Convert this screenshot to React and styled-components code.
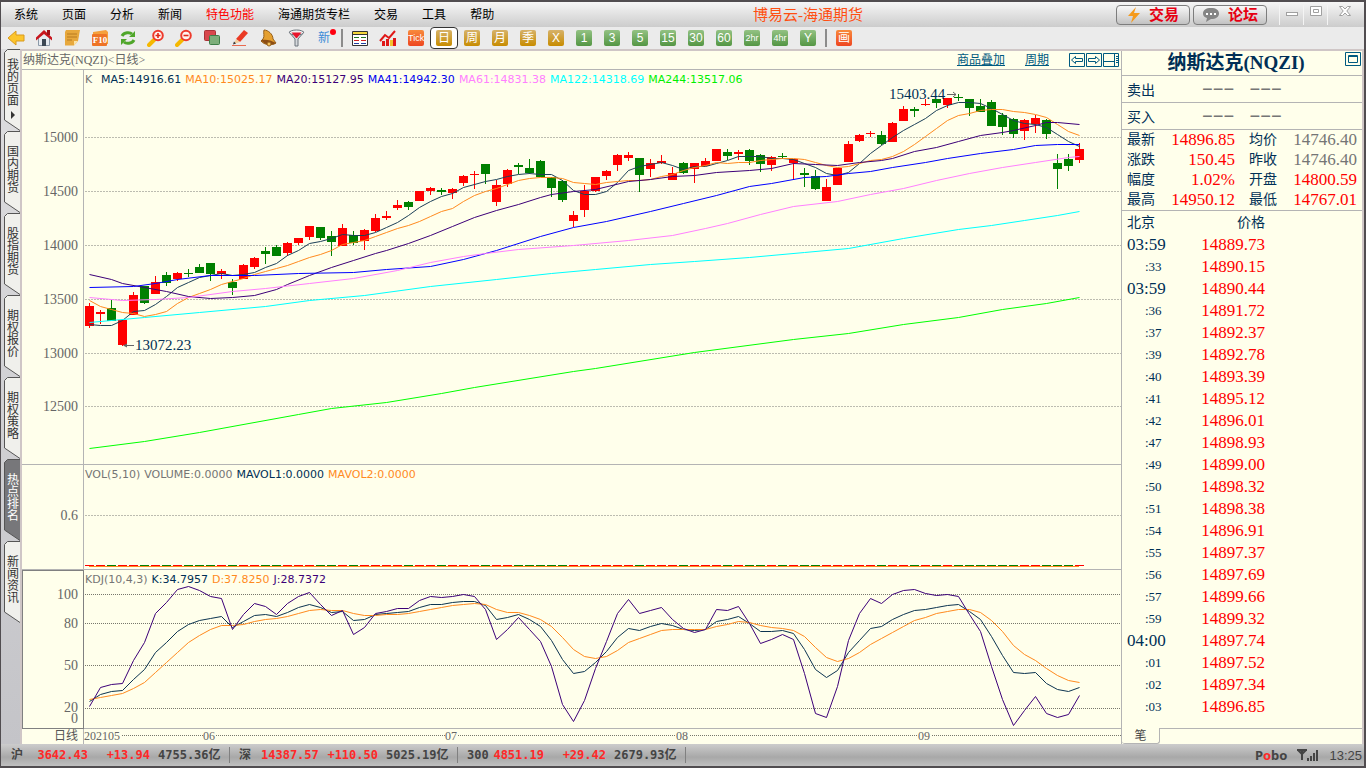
import { useState } from "react";
import styled, { createGlobalStyle } from "styled-components";

const STEP = 11;
const FIRST_X = 5;
const PRICE_TOP = 70;
const VOL_TOP = 465;
const KDJ_TOP = 570;

const menus = [
  { name: "系统" },
  { name: "页面" },
  { name: "分析" },
  { name: "新闻" },
  { name: "特色功能", hot: true },
  { name: "海通期货专栏" },
  { name: "交易" },
  { name: "工具" },
  { name: "帮助" },
];

const sideTabs = [
  { name: "我的页面", arrow: true },
  { name: "国内期货" },
  { name: "股指期货" },
  { name: "期权报价" },
  { name: "期权策略" },
  { name: "热点排名", active: true },
  { name: "新闻资讯" },
];

const periods = [
  ["日", "gold"],
  ["周", "gold"],
  ["月", "gold"],
  ["季", "gold"],
  ["X", "gold"],
  ["1", "green"],
  ["3", "green"],
  ["5", "green"],
  ["15", "green"],
  ["30", "green"],
  ["60", "green"],
  ["2hr", "green"],
  ["4hr", "green"],
  ["Y", "green"],
];

const stats = [
  ["最新", "14896.85", "red", "均价", "14746.40", "gray"],
  ["涨跌", "150.45", "red", "昨收", "14746.40", "gray"],
  ["幅度", "1.02%", "red", "开盘", "14800.59", "red"],
  ["最高", "14950.12", "red", "最低", "14767.01", "red"],
];

const ticks = [
  ["03:59", "14889.73"],
  [":33", "14890.15"],
  ["03:59", "14890.44"],
  [":36", "14891.72"],
  [":37", "14892.37"],
  [":39", "14892.78"],
  [":40", "14893.39"],
  [":41", "14895.12"],
  [":42", "14896.01"],
  [":47", "14898.93"],
  [":49", "14899.00"],
  [":50", "14898.32"],
  [":51", "14898.38"],
  [":54", "14896.91"],
  [":55", "14897.37"],
  [":56", "14897.69"],
  [":57", "14899.66"],
  [":59", "14899.32"],
  ["04:00", "14897.74"],
  [":01", "14897.52"],
  [":02", "14897.34"],
  [":03", "14896.85"],
];

const indexes = [
  ["沪", "3642.43", "+13.94", "4755.36亿"],
  ["深", "14387.57", "+110.50", "5025.19亿"],
  ["300", "4851.19", "+29.42", "2679.93亿"],
];

// up/down flag, body top, body bottom, wick top, wick bottom
const candles = [
  [1, 306, 326, 303, 328], [1, 312, 314, 310, 324], [0, 308, 321, 300, 321], [1, 320, 345, 320, 346],
  [1, 295, 315, 292, 315], [0, 286, 303, 286, 304], [1, 282, 294, 276, 294], [0, 275, 283, 272, 286],
  [1, 273, 279, 272, 281], [0, 273, 274, 269, 277], [0, 267, 273, 264, 273], [0, 263, 274, 263, 281],
  [1, 271, 274, 269, 279], [0, 282, 288, 279, 295], [1, 265, 279, 264, 279], [1, 258, 267, 257, 269],
  [0, 251, 254, 247, 264], [0, 247, 256, 245, 256], [1, 243, 253, 242, 256], [1, 238, 243, 238, 245],
  [1, 226, 237, 226, 240], [0, 227, 238, 227, 240], [0, 236, 242, 231, 256], [1, 228, 246, 224, 246],
  [0, 235, 243, 231, 245], [1, 230, 241, 229, 250], [1, 218, 231, 214, 232], [1, 216, 218, 211, 220],
  [1, 205, 208, 200, 210], [0, 202, 207, 201, 210], [1, 191, 201, 191, 201], [1, 188, 191, 187, 195],
  [0, 190, 192, 188, 195], [1, 189, 193, 188, 199], [1, 176, 183, 175, 186], [1, 174, 175, 171, 189],
  [0, 164, 174, 164, 184], [1, 185, 202, 180, 206], [1, 170, 184, 169, 187], [0, 165, 167, 163, 174],
  [0, 168, 173, 159, 174], [0, 161, 177, 160, 177], [0, 177, 188, 177, 197], [0, 181, 200, 180, 202],
  [1, 215, 221, 211, 227], [1, 191, 210, 185, 217], [1, 177, 191, 177, 192], [1, 171, 176, 170, 180],
  [1, 155, 165, 154, 171], [1, 155, 158, 152, 161], [0, 158, 175, 158, 192], [1, 163, 169, 159, 177],
  [1, 161, 163, 155, 164], [1, 173, 180, 167, 180], [0, 163, 173, 162, 174], [1, 163, 169, 163, 183],
  [1, 161, 166, 158, 166], [1, 149, 161, 149, 161], [0, 152, 156, 149, 160], [1, 152, 154, 150, 160],
  [0, 150, 161, 149, 165], [0, 155, 164, 154, 172], [1, 157, 165, 156, 171], [0, 156, 157, 153, 159],
  [1, 159, 163, 159, 179], [0, 173, 175, 168, 187], [0, 176, 189, 170, 190], [1, 187, 201, 179, 201],
  [1, 168, 185, 168, 185], [1, 144, 162, 141, 162], [1, 135, 141, 134, 142], [1, 133, 134, 131, 137],
  [0, 135, 144, 131, 145], [1, 123, 142, 122, 142], [1, 109, 121, 106, 121], [0, 109, 111, 107, 117],
  [1, 104, 105, 99, 106], [0, 99, 103, 99, 108], [1, 98, 105, 98, 108], [0, 97, 98, 94, 101],
  [0, 99, 108, 99, 116], [0, 106, 112, 99, 112], [0, 102, 126, 100, 126], [0, 115, 127, 113, 135],
  [0, 119, 134, 118, 138], [1, 120, 131, 119, 140], [1, 118, 124, 115, 133], [0, 120, 134, 119, 139],
  [0, 163, 169, 154, 189], [0, 159, 166, 154, 171], [1, 149, 160, 143, 163],
];

const ma5 = [
  324, 325, 325, 320, 311, 310, 304, 296, 287, 282, 277, 275, 273, 275, 274, 272, 267, 263, 255, 250, 243, 241, 238,
  234, 235, 235, 232, 227, 222, 215, 207, 201, 196, 193, 187, 184, 181, 179, 176, 174, 173, 174, 174, 180, 190, 194,
  194, 191, 182, 170, 166, 164, 162, 165, 169, 166, 166, 163, 160, 156, 156, 156, 158, 158, 159, 163, 167, 173, 175,
  172, 163, 153, 145, 137, 130, 124, 118, 110, 105, 102, 102, 103, 108, 114, 120, 123, 124, 127, 134, 141, 146,
];

const ma10 = [
  300, 306, 309, 312, 313, 316, 314, 311, 303, 297, 293, 289, 284, 281, 278, 274, 271, 268, 265, 261, 257, 254, 250,
  244, 242, 240, 236, 232, 228, 225, 221, 216, 211, 208, 201, 195, 191, 188, 184, 180, 178, 177, 177, 178, 182, 183,
  184, 182, 181, 180, 180, 179, 176, 174, 170, 167, 165, 162, 163, 162, 162, 160, 159, 158, 158, 159, 162, 165, 167,
  166, 163, 160, 159, 156, 151, 144, 136, 128, 120, 115, 113, 110, 109, 109, 111, 112, 114, 117, 124, 131, 135,
];

// slower averages only keep the points where they bend: [bar, y]
const ma20 = [
  [0, 274], [2, 279], [3, 283], [5, 287], [7, 291], [9, 296], [11, 298], [13, 297], [15, 295], [17, 289], [18, 284],
  [20, 275], [22, 267], [24, 260], [26, 253], [27, 250], [29, 243], [31, 235], [33, 226], [35, 217], [37, 210],
  [39, 204], [41, 197], [42, 194], [44, 191], [46, 189], [49, 181], [51, 179], [53, 176], [55, 175], [57, 172],
  [60, 170], [62, 168], [64, 163], [66, 164], [68, 165], [70, 162], [72, 160], [73, 158], [75, 151], [77, 147],
  [79, 141], [81, 135], [83, 132], [84, 130], [86, 125], [87, 122], [88, 122], [90, 124],
];

const ma41 = [
  [0, 287], [4, 286], [6, 283], [8, 279], [11, 275], [15, 275], [19, 273], [24, 272], [27, 269], [31, 266],
  [34, 259], [37, 250], [41, 236], [44, 227], [47, 221], [51, 211], [54, 203], [57, 195], [60, 186], [62, 183],
  [65, 177], [67, 176], [69, 173], [71, 171], [73, 167], [76, 162], [78, 158], [81, 153], [84, 149], [86, 145],
  [88, 144], [90, 144],
];

const ma61 = [
  [0, 297], [3, 300], [6, 299], [9, 297], [13, 291], [16, 288], [20, 283], [24, 278], [28, 270], [31, 262],
  [34, 256], [36, 253], [39, 249], [44, 245], [49, 240], [53, 235], [56, 228], [58, 223], [61, 214], [64, 206],
  [68, 201], [71, 194], [74, 188], [77, 180], [80, 173], [83, 167], [86, 162], [89, 157], [90, 156],
];

const ma122 = [
  [0, 322], [5, 317], [10, 312], [16, 306], [20, 300], [25, 295], [31, 286], [37, 279], [42, 273], [46, 269],
  [51, 264], [55, 261], [60, 257], [65, 252], [69, 248], [74, 238], [79, 229], [82, 225], [85, 220], [88, 215],
  [90, 211],
];

const ma244 = [
  [0, 448], [5, 441], [10, 432], [19, 414], [22, 408], [27, 402], [32, 393], [35, 387], [44, 371], [46, 368],
  [55, 352], [64, 339], [69, 333], [74, 324], [79, 317], [83, 309], [87, 303], [90, 297],
];

const lineJ = [
  706, 687, 684, 683, 660, 642, 613, 602, 589, 586, 590, 596, 598, 629, 614, 603, 606, 614, 603, 596, 592, 604, 615,
  610, 634, 627, 613, 611, 608, 608, 600, 596, 597, 596, 594, 596, 609, 639, 629, 617, 629, 641, 666, 704, 721, 700,
  668, 641, 613, 599, 613, 610, 607, 619, 628, 632, 629, 609, 610, 606, 623, 643, 639, 634, 639, 673, 713, 717, 686,
  640, 613, 598, 603, 594, 590, 589, 593, 595, 594, 596, 614, 631, 666, 699, 725, 710, 696, 713, 717, 714, 695,
];

const lineK = [
  701, 694, 691, 690, 679, 669, 652, 642, 631, 624, 620, 618, 616, 627, 621, 615, 614, 616, 612, 607, 604, 607, 612,
  611, 620, 619, 614, 613, 612, 611, 607, 604, 604, 602, 601, 601, 605, 619, 617, 614, 619, 626, 640, 659, 673, 671,
  662, 651, 637, 628, 630, 626, 623, 625, 629, 630, 629, 621, 619, 616, 623, 631, 631, 630, 633, 649, 669, 677, 670,
  652, 640, 628, 626, 619, 614, 610, 609, 607, 605, 604, 611, 619, 636, 655, 672, 673, 672, 683, 689, 691, 687,
];

const lineD = [
  699, 697, 695, 693, 688, 682, 672, 662, 652, 642, 635, 629, 625, 625, 624, 621, 619, 618, 616, 613, 610, 609, 610,
  610, 613, 615, 615, 614, 614, 613, 611, 609, 607, 605, 604, 603, 604, 609, 612, 612, 615, 619, 626, 637, 649, 656,
  658, 656, 650, 642, 638, 634, 630, 629, 629, 629, 629, 626, 624, 621, 622, 625, 627, 628, 630, 636, 647, 657, 661,
  658, 652, 644, 638, 632, 626, 620, 617, 613, 611, 609, 609, 612, 620, 631, 645, 654, 660, 668, 675, 680, 682,
];

const toPoints = (data, top) =>
  data
    .map((e, i) => {
      const [bar, y] = Array.isArray(e) ? e : [i, e];
      return `${FIRST_X + bar * STEP + 0.5},${y - top + 0.5}`;
    })
    .join(" ");

function Grid({ rows, top, dark }) {
  return rows.map((y) => (
    <line
      key={y}
      x1="1"
      x2="100%"
      y1={y - top + 0.5}
      y2={y - top + 0.5}
      stroke={dark ? "#77776c" : "#bcbcb0"}
      strokeDasharray={dark ? "1 1" : "2 1"}
    />
  ));
}

function Axis({ rows, top }) {
  return (
    <AxisSvg>
      {rows.map(([label, y]) => (
        <text key={label} x="56" y={y - top + 5} textAnchor="end">
          {label}
        </text>
      ))}
    </AxisSvg>
  );
}

function PricePanel() {
  return (
    <>
      <AxisCell>
        <Axis
          top={PRICE_TOP}
          rows={[["15000", 137], ["14500", 191], ["14000", 245], ["13500", 299], ["13000", 353], ["12500", 406]]}
        />
      </AxisCell>
      <PlotCell>
        <Legend>
          <LegendHead>K</LegendHead>
          <LegendItem $color="#002f56">MA5:14916.61</LegendItem>
          <LegendItem $color="#ff8a1e">MA10:15025.17</LegendItem>
          <LegendItem $color="#3c0078">MA20:15127.95</LegendItem>
          <LegendItem $color="#0000ee">MA41:14942.30</LegendItem>
          <LegendItem $color="#ff80ff">MA61:14831.38</LegendItem>
          <LegendItem $color="#00ffff">MA122:14318.69</LegendItem>
          <LegendItem $color="#00f000">MA244:13517.06</LegendItem>
        </Legend>
        <PlotSvg>
          <Grid rows={[137, 191, 245, 299, 353, 406]} top={PRICE_TOP} />
          {candles.map(([up, top, bottom, high, low], i) => {
            const x = FIRST_X + i * STEP;
            const color = up ? "#ff0000" : "#008000";
            return (
              <g key={i} fill={color} shapeRendering="crispEdges">
                <rect x={x - 4} y={top - PRICE_TOP} width="9" height={bottom - top} />
                <rect x={x} y={high - PRICE_TOP} width="1" height={low - high} />
              </g>
            );
          })}
          <Line points={toPoints(ma5, PRICE_TOP)} stroke="#1c4058" />
          <Line points={toPoints(ma10, PRICE_TOP)} stroke="#ff8a1e" />
          <Line points={toPoints(ma20, PRICE_TOP)} stroke="#3c0078" />
          <Line points={toPoints(ma41, PRICE_TOP)} stroke="#0000ff" />
          <Line points={toPoints(ma61, PRICE_TOP)} stroke="#ff80ff" />
          <Line points={toPoints(ma122, PRICE_TOP)} stroke="#00ffff" />
          <Line points={toPoints(ma244, PRICE_TOP)} stroke="#00ff00" />
          <g stroke="#666" fill="#666">
            <path d="M40 275.5h10" />
            <path d="M39 275.5l4-2v4z" stroke="none" />
            <path d="M863 24.5h9m-3-2.500l3 2.500l-3 2.500" fill="none" />
          </g>
          <Mark x="51" y="280">
            13072.23
          </Mark>
          <Mark x="805" y="29">
            15403.44
          </Mark>
        </PlotSvg>
      </PlotCell>
    </>
  );
}

function VolumePanel() {
  return (
    <>
      <AxisCell>
        <Axis top={VOL_TOP} rows={[["0.6", 515]]} />
      </AxisCell>
      <PlotCell>
        <Legend>
          <LegendItem $color="#757575">VOL(5,10)</LegendItem>
          <LegendItem $color="#757575">VOLUME:0.0000</LegendItem>
          <LegendItem $color="#002f56">MAVOL1:0.0000</LegendItem>
          <LegendItem $color="#ff8a1e">MAVOL2:0.0000</LegendItem>
        </Legend>
        <PlotSvg>
          <Grid rows={[515]} top={VOL_TOP} />
          <g shapeRendering="crispEdges">
            {candles.map(([up], i) => (
              <rect key={i} x={i * STEP + 1} y="100" width="9" height="1" fill={up ? "#ff0000" : "#008000"} />
            ))}
            <rect x={FIRST_X} y="101" width={90 * STEP} height="1" fill="#ff8a1e" />
          </g>
        </PlotSvg>
      </PlotCell>
    </>
  );
}

function KdjPanel() {
  return (
    <>
      <AxisCell $selected>
        <Axis top={KDJ_TOP} rows={[["100", 594], ["80", 623], ["50", 665], ["20", 707], ["0", 718]]} />
      </AxisCell>
      <PlotCell>
        <Legend>
          <LegendItem $color="#757575">KDJ(10,4,3)</LegendItem>
          <LegendItem $color="#002f56">K:34.7957</LegendItem>
          <LegendItem $color="#ff8a1e">D:37.8250</LegendItem>
          <LegendItem $color="#3c0078">J:28.7372</LegendItem>
        </Legend>
        <PlotSvg>
          <Grid rows={[594, 623, 665, 708]} top={KDJ_TOP} dark />
          <Line points={toPoints(lineK, KDJ_TOP)} stroke="#0c3450" />
          <Line points={toPoints(lineD, KDJ_TOP)} stroke="#ff8a1e" />
          <Line points={toPoints(lineJ, KDJ_TOP)} stroke="#3c0078" />
        </PlotSvg>
      </PlotCell>
    </>
  );
}

function DatePanel() {
  return (
    <>
      <DateName>日线</DateName>
      <PlotCell>
        <DateSvg>
          <line x1="38" x2="100%" y1="6.500" y2="6.500" stroke="#77776c" strokeDasharray="1 1" />
          {[["202105", 0], ["06", 119], ["07", 361], ["08", 592], ["09", 834]].map(([label, x]) => (
            <g key={label}>
              <rect x={x} y="0" width={label.length * 6 + 1} height="14" fill="#ffffeb" />
              <text x={x} y="11">
                {label}
              </text>
            </g>
          ))}
        </DateSvg>
      </PlotCell>
    </>
  );
}

function Magnifier({ plus }) {
  return (
    <svg width="18" height="18" viewBox="0 0 18 18">
      <path d="M2 16l5-5" stroke="#f5b800" strokeWidth="4" strokeLinecap="round" />
      <circle cx="11" cy="6.500" r="4.800" fill="#fff4f0" stroke="#ee3a2c" strokeWidth="2" />
      <path d={plus ? "M8.500 6.500h5M11 4v5" : "M8.500 6.500h5"} stroke="#e02818" strokeWidth="1.600" />
    </svg>
  );
}

function NewIcon() {
  return (
    <>
      <NewText>新</NewText>
      <NewDot />
    </>
  );
}

const tools = [
  {
    name: "后退",
    icon: (
      <svg width="18" height="18" viewBox="0 0 18 18">
        <path d="M1 9l8-7v4h8v6H9v4z" fill="#fcc52c" stroke="#d99a1c" strokeLinejoin="round" />
      </svg>
    ),
  },
  {
    name: "首页",
    icon: (
      <svg width="18" height="18" viewBox="0 0 18 18">
        <path d="M3.500 8v8.500h11V8L9 4z" fill="#e6ebf0" stroke="#8b99a8" />
        <path d="M1 8.500l8-7.500l8 7.500v3L9 5L1 11.500z" fill="#c8161e" />
        <rect x="12" y="1" width="3" height="5" fill="#a01018" />
        <rect x="7" y="10" width="4" height="7" fill="#3c4854" />
      </svg>
    ),
  },
  {
    name: "公告",
    icon: (
      <svg width="18" height="18" viewBox="0 0 18 18">
        <path d="M3 1h14l-2 11l-4 4.500H2V3z" fill="#e7a83c" />
        <path d="M15 12h-4v4.500z" fill="#fbe3a6" />
        <path d="M4 5h10M4 8h10M4 11h5" stroke="#b87a20" />
      </svg>
    ),
  },
  {
    name: "F10",
    icon: (
      <svg width="18" height="18" viewBox="0 0 18 18">
        <path d="M2 3l13-2l2 2v12H2z" fill="#f5a03c" />
        <rect x="1" y="5" width="15" height="12" rx="1" fill="#ee7426" />
        <text x="9" y="14" textAnchor="middle" fill="#fff" fontSize="9" fontWeight="bold" fontFamily="Liberation Serif">
          F10
        </text>
      </svg>
    ),
  },
  {
    name: "刷新",
    icon: (
      <svg width="18" height="18" viewBox="0 0 18 18" fill="none" stroke="#4fa62a" strokeWidth="3">
        <path d="M3 7c2-4 8-4 10-2" />
        <path d="M15 11c-2 4-8 4-10 2" />
        <path d="M16 2v6h-6z M2 16v-6h6z" fill="#4fa62a" stroke="none" />
      </svg>
    ),
  },
  { name: "放大", icon: <Magnifier plus /> },
  { name: "缩小", icon: <Magnifier /> },
  {
    name: "叠加",
    icon: (
      <svg width="18" height="18" viewBox="0 0 18 18">
        <rect x="1.500" y="1.500" width="11" height="10" rx="1" fill="#d8484c" stroke="#a83438" />
        <rect x="6.500" y="6.500" width="10" height="9" rx="1" fill="#7cae7a" stroke="#3e7e48" />
      </svg>
    ),
  },
  {
    name: "画线",
    icon: (
      <svg width="18" height="18" viewBox="0 0 18 18">
        <path d="M5 10l8-9l4 3l-8 9z" fill="#ea3a24" />
        <path d="M5 10l4 3l-6 2z" fill="#f2cc9c" />
        <path d="M2 15.500l3-1l-2-2z" fill="#333" />
        <path d="M1 16.500h14" stroke="#e86a50" />
      </svg>
    ),
  },
  {
    name: "预警",
    icon: (
      <svg width="18" height="18" viewBox="0 0 18 18">
        <path d="M5 1c4 0 9 4 9 9l3 4c-4 3-12 2-15-2l2-2c2-3 0-6 1-9z" fill="#e5a030" stroke="#96601c" />
        <path d="M2 11c5-1 10 0 15 3c-4 3-12 2-15-3z" fill="#8c4d14" />
        <circle cx="10" cy="15" r="2" fill="#f6c45c" stroke="#96601c" />
      </svg>
    ),
  },
  {
    name: "筛选",
    icon: (
      <svg width="18" height="18" viewBox="0 0 18 18">
        <path d="M2 3l6 7v7h3v-7l6-7z" fill="#d5d8dc" stroke="#6c747c" />
        <ellipse cx="9.500" cy="3.500" rx="7" ry="2.500" fill="#f2f2f2" stroke="#6c747c" />
        <path d="M4.500 3.500h10L10 9h-1z" fill="#e8142c" />
      </svg>
    ),
  },
  { name: "新", icon: <NewIcon /> },
];

export default function App() {
  const [period, setPeriod] = useState("日");

  return (
    <>
      <GlobalStyle />
      <Window>
        <TitleBar>
          <Menu>
            {menus.map((menu) => (
              <MenuButton key={menu.name} $hot={menu.hot}>
                {menu.name}
              </MenuButton>
            ))}
          </Menu>
          <AppTitle>博易云-海通期货</AppTitle>
          <TitleActions>
            <PillButton>
              <svg width="14" height="16" viewBox="0 0 14 16">
                <path d="M9 0L1 9h5L4 16l9-10H7z" fill="#f59a1c" />
              </svg>
              交易
            </PillButton>
            <PillButton>
              <svg width="18" height="15" viewBox="0 0 18 15">
                <path d="M9 1c5 0 8 2 8 5.500S14 12 9 12l-5 3l1-4C2 10 1 8.500 1 6.500C1 3 4 1 9 1z" fill="#858585" />
                <path d="M4 6h2v2H4zM8 6h2v2H8zM12 6h2v2h-2z" fill="#fff" />
              </svg>
              论坛
            </PillButton>
          </TitleActions>
          <WindowButtons>
            <WindowButton aria-label="最小化">
              <svg width="14" height="12" viewBox="0 0 14 12" fill="#fff" stroke="#a0a0a0">
                <rect x="1.500" y="7.500" width="11" height="3" />
              </svg>
            </WindowButton>
            <WindowButton aria-label="最大化">
              <svg width="14" height="12" viewBox="0 0 14 12" fill="#fff" stroke="#a0a0a0">
                <path d="M1.500 1.500h11v9h-11zM4.500 4.500h5v3h-5z" />
              </svg>
            </WindowButton>
            <WindowButton aria-label="关闭" $wide>
              <svg width="14" height="12" viewBox="0 0 14 12" fill="#fff" stroke="#a0a0a0">
                <path d="M1.500 1.500h3L7 4l2.500-2.500h3L8.800 6l3.700 4.500h-3L7 8l-2.500 2.500h-3L5.200 6z" />
              </svg>
            </WindowButton>
          </WindowButtons>
        </TitleBar>

        <Toolbar>
          {tools.map((tool) => (
            <ToolButton key={tool.name} aria-label={tool.name}>
              {tool.icon}
            </ToolButton>
          ))}
          <Divider />
          <ToolButton aria-label="报价">
            <svg width="16" height="16" viewBox="0 0 16 16">
              <path d="M.5 1.500h15v14H.5z" fill="#fff" stroke="#333" />
              <path d="M1 2h14v2H1z" fill="#f2d53c" />
              <path d="M1 4.500h14" stroke="#333" />
              <path d="M2 7.500h5M9 7.500h5" stroke="#207820" />
              <path d="M2 10.500h5M9 10.500h5" stroke="#d02020" />
              <path d="M2 13.500h5M9 13.500h5" stroke="#2040a0" />
            </svg>
          </ToolButton>
          <ToolButton aria-label="走势">
            <svg width="18" height="18" viewBox="0 0 18 18">
              <path d="M3 12h3v5H3zM7 10h3v7H7z" fill="#e01818" />
              <path d="M11 11h3v6h-3z" fill="#f2c230" />
              <path d="M14 9h3v8h-3z" fill="#e01818" />
              <path d="M1 12l5-6l4 3l6-7" fill="none" stroke="#e01818" strokeWidth="2" />
            </svg>
          </ToolButton>
          <ToolButton>
            <Chip $tone="orange" $small>
              Tick
            </Chip>
          </ToolButton>
          {periods.map(([name, tone]) => (
            <ToolButton key={name} $active={name === period} onClick={() => setPeriod(name)}>
              <Chip $tone={tone} $small={name.length > 2}>
                {name}
              </Chip>
            </ToolButton>
          ))}
          <Divider />
          <ToolButton>
            <Chip $tone="orange">画</Chip>
          </ToolButton>
        </Toolbar>

        <Body>
          <SideTabs>
            {sideTabs.map((tab) => (
              <SideTab key={tab.name} $active={tab.active} $arrow={tab.arrow}>
                <TabShape viewBox="0 0 16 82" $active={tab.active}>
                  <path d="M16 .5H3.500L.5 3.500V71L16 81.500" />
                </TabShape>
                <TabText>{tab.name}</TabText>
                {tab.arrow && <TabArrow />}
              </SideTab>
            ))}
          </SideTabs>

          <Main>
            <ChartHeader>
              <span>纳斯达克(NQZI)&lt;日线&gt;</span>
              <HeaderLinks>
                <HeaderLink href="#overlay">商品叠加</HeaderLink>
                <HeaderLink href="#period">周期</HeaderLink>
                <svg width="51" height="15" viewBox="0 0 51 15" fill="none" stroke="#005a80">
                  <path d="M.5.500h15v13H.5zM17.500.500h15v13h-15zM34.500.500h15v13h-15z" />
                  <path d="M2.500 7l4-3.500v2h7v3h-7v2zM30.500 7l-4-3.500v2h-7v3h7v2z" />
                  <path d="M35 8.500h10M45.500 1v12M47 3.500h2M47 5.500h2M47 7.500h2M47 9.500h2" />
                </svg>
              </HeaderLinks>
            </ChartHeader>
            <Charts>
              <PricePanel />
              <VolumePanel />
              <KdjPanel />
              <DatePanel />
            </Charts>
          </Main>

          <Quote>
            <QuoteTitle>
              纳斯达克(NQZI)
              <Maximize aria-label="展开">
                <svg width="16" height="14" viewBox="0 0 16 14" fill="none" stroke="#005a80">
                  <path d="M.5.500h15v13H.5zM3.500 3.500h9v7h-9zM3.500 4.500h9" />
                </svg>
              </Maximize>
            </QuoteTitle>
            <BidRow>
              <span>卖出</span>
              <Dashes>−−−</Dashes>
              <Dashes>−−−</Dashes>
            </BidRow>
            <BidRow>
              <span>买入</span>
              <Dashes>−−−</Dashes>
              <Dashes>−−−</Dashes>
            </BidRow>
            <Stats>
              {stats.map(([label, value, tone, label2, value2, tone2]) => (
                <StatRow key={label}>
                  <span>{label}</span>
                  <Price $tone={tone}>{value}</Price>
                  <StatLabel>{label2}</StatLabel>
                  <Price $tone={tone2}>{value2}</Price>
                </StatRow>
              ))}
            </Stats>
            <TickTable>
              <thead>
                <tr>
                  <th>北京</th>
                  <th>价格</th>
                </tr>
              </thead>
              <tbody>
                {ticks.map(([time, price], i) => (
                  <tr key={i}>
                    <TickTime $short={time.length < 5}>{time}</TickTime>
                    <TickPrice>{price}</TickPrice>
                  </tr>
                ))}
              </tbody>
            </TickTable>
            <QuoteFooter>
              <QuoteTab>笔</QuoteTab>
              <FooterLine />
            </QuoteFooter>
          </Quote>
        </Body>

        <StatusBar>
          {indexes.map(([label, price, change, amount]) => (
            <IndexGroup key={label}>
              <span>{label}</span>
              <Rise>{price}</Rise>
              <Rise>{change}</Rise>
              <Amount>{amount}</Amount>
            </IndexGroup>
          ))}
          <StatusRight>
            <Brand>
              P<i>o</i>bo
            </Brand>
            <svg width="22" height="14" viewBox="0 0 22 14" fill="none" stroke="#444">
              <path d="M0 2h10M1 2l4 4l4-4M5 2v10" strokeWidth="2" />
              <path d="M11 10v3M14 8v5M17 5v8M20 2v11" strokeWidth="2" />
            </svg>
            <Clock>13:25</Clock>
          </StatusRight>
        </StatusBar>
      </Window>
    </>
  );
}

const GlobalStyle = createGlobalStyle`
  * {
    box-sizing: border-box;
  }
  body {
    margin: 0;
    font-family: "Liberation Serif", "Noto Sans CJK SC", serif;
    font-size: 12px;
    overflow: hidden;
  }
  button {
    border: none;
    padding: 0;
    background: none;
    font: inherit;
    color: inherit;
  }
`;

const Window = styled.div`
  display: flex;
  flex-direction: column;
  height: 100vh;
  border: 2px solid #514d50;
  border-left-width: 1px;
  background: #ebebeb;
`;

const TitleBar = styled.header`
  display: flex;
  align-items: center;
  flex: none;
  height: 25px;
  background: linear-gradient(#f6f6f6, #cccccc);
`;

const Menu = styled.nav`
  display: flex;
  gap: 24px;
  padding-left: 13px;
`;

const MenuButton = styled.button`
  line-height: 16px;
  color: ${(props) => (props.$hot ? "#ff0000" : "#000")};
`;

const AppTitle = styled.h1`
  flex: 1;
  margin: 0;
  padding-left: 6px;
  font-size: 15px;
  font-weight: normal;
  line-height: 20px;
  text-align: center;
  color: #ff4f12;
`;

const TitleActions = styled.div`
  display: flex;
  gap: 3px;
  margin-right: 12px;
`;

const WindowButtons = styled.div`
  display: flex;
  height: 20px;
  margin-right: 3px;
`;

const PillButton = styled.button`
  display: flex;
  align-items: center;
  justify-content: center;
  gap: 8px;
  width: 74px;
  height: 20px;
  border: 1px solid #7d7d7d;
  border-radius: 4px;
  background: linear-gradient(#f8f8f8, #c2c2c2);
  font-size: 15px;
  font-weight: bold;
  line-height: 18px;
  color: #e60012;
`;

const WindowButton = styled.button`
  display: flex;
  align-items: flex-start;
  justify-content: center;
  width: ${(props) => (props.$wide ? "34px" : "24px")};
  border-left: 1px solid #f4f4f4;
`;

const Toolbar = styled.div`
  display: flex;
  align-items: center;
  flex: none;
  height: 24px;
  padding-left: 1px;
  border-bottom: 2px solid #cfc6c6;
`;

const ToolButton = styled.button`
  position: relative;
  display: flex;
  align-items: center;
  justify-content: center;
  width: 28px;
  height: 22px;
  border: 1px solid ${(props) => (props.$active ? "#333" : "transparent")};
  border-radius: 4px;
  background: ${(props) => (props.$active ? "#fff" : "none")};
`;

const tones = {
  gold: "linear-gradient(#d6b26a, #c88c00)",
  green: "linear-gradient(#93c283, #549644)",
  orange: "linear-gradient(#f88a3c, #ee4620)",
};

const Chip = styled.span`
  width: 16px;
  height: 16px;
  border-radius: 2px;
  background: ${(props) => tones[props.$tone]};
  color: #fff;
  font-family: "Liberation Sans", "Noto Sans CJK SC", sans-serif;
  font-size: ${(props) => (props.$small ? "9px" : "12px")};
  line-height: 16px;
  text-align: center;
`;

const Divider = styled.i`
  width: 2px;
  height: 18px;
  margin: 0 3px;
  background: #8c8c8c;
`;

const NewText = styled.span`
  font-size: 12px;
  line-height: 16px;
  color: #3c8cd8;
`;

const NewDot = styled.i`
  position: absolute;
  top: 1px;
  right: 1px;
  width: 6px;
  height: 6px;
  border-radius: 50%;
  background: #ff0010;
`;

const Body = styled.div`
  display: grid;
  grid-template-columns: 21px minmax(0, 1fr) 243px;
  flex: 1;
  min-height: 0;
`;

const SideTabs = styled.aside`
  display: flex;
  flex-direction: column;
  margin-top: -2px;
  padding-left: 3px;
  border-right: 2px solid #cfc6c6;
  background: linear-gradient(#dedee0, #c4c4c8);
`;

const SideTab = styled.button`
  position: relative;
  flex: none;
  width: 16px;
  height: 82px;
  padding: ${(props) => (props.$arrow ? "10px" : "15px")} 0 0 2px;
  display: flex;
  flex-direction: column;
  align-items: center;
  gap: 4px;
  color: ${(props) => (props.$active ? "#fff" : "#333")};
`;

const TabShape = styled.svg`
  position: absolute;
  inset: 0;
  fill: ${(props) => (props.$active ? "#77777a" : "#f0f0ec")};
  stroke: #555;
`;

const TabText = styled.span`
  position: relative;
  width: 12px;
  line-height: 12px;
  word-break: break-all;
`;

const TabArrow = styled.i`
  position: relative;
  border: 4px solid transparent;
  border-left-color: #333;
  border-right: none;
`;

const Main = styled.main`
  display: flex;
  flex-direction: column;
  min-width: 0;
  background: #ffffeb;
`;

const ChartHeader = styled.div`
  display: flex;
  align-items: center;
  justify-content: space-between;
  flex: none;
  height: 19px;
  padding: 0 1px;
  border-bottom: 1px solid #b4b4b4;
  line-height: 18px;
  color: #666;
`;

const HeaderLinks = styled.div`
  display: flex;
  align-items: center;
  gap: 20px;
`;

const HeaderLink = styled.a`
  color: #005a80;
`;

const Charts = styled.div`
  display: grid;
  grid-template-columns: 62px minmax(0, 1fr);
  grid-template-rows: minmax(0, 1fr) 105px 159px 15px;
  flex: 1;
  min-height: 0;
`;

const AxisCell = styled.div`
  min-height: 0;
  border-right: 1px solid #b4b4b4;
  border-bottom: 1px solid #b4b4b4;
  outline: ${(props) => (props.$selected ? "1px solid #808080" : "none")};
  outline-offset: -1px;
`;

const AxisSvg = styled.svg`
  display: block;
  width: 100%;
  height: 100%;
  font-size: 14px;
  fill: #666;
`;

const PlotCell = styled.div`
  position: relative;
  min-height: 0;
  border-bottom: 1px solid #b4b4b4;

  &:last-child {
    border-bottom: none;
  }
`;

const PlotSvg = styled.svg`
  display: block;
  width: 100%;
  height: 100%;
`;

const Line = styled.polyline`
  fill: none;
  stroke-width: 1;
`;

const Mark = styled.text`
  font-size: 15px;
  fill: #002f56;
`;

const Legend = styled.div`
  position: absolute;
  top: 1px;
  left: 1px;
  display: flex;
  gap: 4px;
  font-family: "DejaVu Sans", sans-serif;
  font-size: 11px;
  line-height: 17px;
  white-space: nowrap;
`;

const LegendItem = styled.span`
  color: ${(props) => props.$color};
`;

const LegendHead = styled.span`
  width: 12px;
  color: #757575;
`;

const DateName = styled.div`
  padding-right: 5px;
  border-right: 1px solid #b4b4b4;
  line-height: 15px;
  text-align: right;
  color: #555;
`;

const DateSvg = styled(PlotSvg)`
  font-size: 12px;
  fill: #666;
`;

const Quote = styled.section`
  display: flex;
  flex-direction: column;
  border-left: 1px solid #b4b4b4;
  border-right: 2px solid #cfc6c6;
  background: #ffffeb;
  font-size: 14px;
  color: #002f56;
`;

const QuoteTitle = styled.h2`
  position: relative;
  margin: 0;
  height: 25px;
  padding-right: 12px;
  border-bottom: 1px solid #b4b4b4;
  font-size: 19px;
  line-height: 24px;
  text-align: center;
`;

const Maximize = styled.button`
  position: absolute;
  top: 1px;
  right: 1px;
  display: flex;
`;

const BidRow = styled.div`
  display: flex;
  align-items: center;
  gap: 15px;
  height: 27px;
  padding-left: 5px;
  border-bottom: 1px solid #b4b4b4;

  span:first-child {
    width: 60px;
  }
`;

const Dashes = styled.span`
  padding-top: 2px;
  font-family: "Liberation Mono", monospace;
  font-size: 18px;
  color: #757575;
`;

const Stats = styled.div`
  padding: 0 5px;
  border-bottom: 1px solid #b4b4b4;
`;

const StatRow = styled.div`
  display: grid;
  grid-template-columns: 28px 80px 1fr 80px;
  height: 20px;
  line-height: 20px;
`;

const StatLabel = styled.span`
  padding-left: 14px;
`;

const Price = styled.span`
  font-size: 17px;
  text-align: right;
  color: ${(props) => (props.$tone === "red" ? "#ff0000" : "#757575")};
`;

const TickTable = styled.table`
  width: 138px;
  margin: 1px 0 auto 5px;
  border-collapse: collapse;

  th,
  td {
    height: 22px;
    padding: 0;
    line-height: 22px;
  }

  th {
    font-weight: normal;
    text-align: left;
  }

  th:last-child {
    text-align: right;
  }
`;

const TickTime = styled.td`
  text-indent: ${(props) => (props.$short ? "18px" : "0")};
  font-size: ${(props) => (props.$short ? "13px" : "17px")};
`;

const TickPrice = styled.td`
  font-size: 17px;
  text-align: right;
  color: #ff0000;
`;

const QuoteFooter = styled.div`
  display: flex;
  flex: none;
  height: 16px;
`;

const QuoteTab = styled.button`
  width: 38px;
  border: 1px solid #b4b4b4;
  border-top: none;
  border-left: none;
  border-radius: 0 0 3px 3px;
  font-size: 12px;
  line-height: 14px;
  color: #444;
`;

const FooterLine = styled.i`
  flex: 1;
  border-top: 1px solid #b4b4b4;
`;

const StatusBar = styled.footer`
  display: flex;
  align-items: center;
  flex: none;
  height: 22px;
  padding-left: 10px;
  background: linear-gradient(#cccccc, #a8a8a8 60%, #c0c0c0);
  font-family: "DejaVu Sans Mono", "Noto Sans CJK SC", monospace;
  font-weight: bold;
  color: #444;
`;

const IndexGroup = styled.div`
  display: grid;
  grid-template-columns: 22px 55px 62px 80px;
  width: 228px;
  line-height: 16px;
`;

const Rise = styled.span`
  text-align: right;
  color: #ff2828;
`;

const Amount = styled.span`
  padding-left: 8px;
  border-right: 1px solid #808080;
`;

const StatusRight = styled.div`
  display: flex;
  align-items: center;
  gap: 10px;
  margin-left: auto;
  padding-right: 2px;
`;

const Brand = styled.span`
  font-family: "Noto Sans", sans-serif;
  font-size: 13px;

  i {
    font-style: normal;
    color: #ff2828;
  }
`;

const Clock = styled.time`
  font-family: "Liberation Sans", sans-serif;
  font-size: 13px;
  font-weight: normal;
`;
